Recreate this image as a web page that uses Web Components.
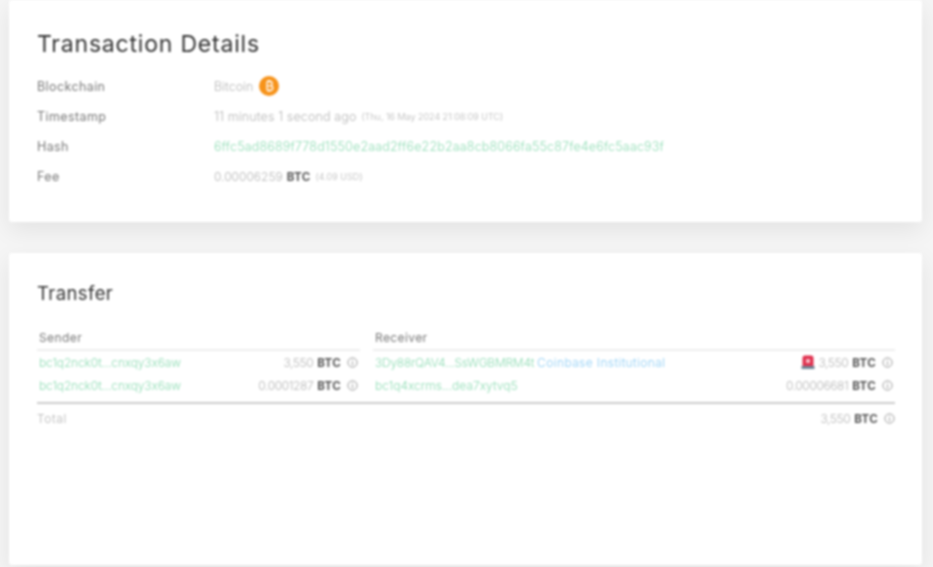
<!DOCTYPE html>
<html>
<head>
<meta charset="utf-8">
<title>Transaction</title>
<style>
html, body { margin: 0; height: 100%; }
body {
	background: #f5f5f5;
	font-family: "Inter", "Liberation Sans", sans-serif;
	overflow: hidden;
}
</style>
</head>
<body>
<tx-page>
	<tx-card title="Transaction Details" size="big">
		<detail-row label="Blockchain"><span>Bitcoin</span> <btc-logo></btc-logo></detail-row>
		<detail-row label="Timestamp"><span style="letter-spacing:.13px">11 minutes 1 second ago</span> <small style="font-size:9px">(Thu, 16 May 2024 21:08:09 UTC)</small></detail-row>
		<detail-row label="Hash"><span style="color:#8fdcb4;letter-spacing:.17px">6ffc5ad8689f778d1550e2aad2ff6e22b2aa8cb8066fa55c87fe4e6fc5aac93f</span></detail-row>
		<detail-row label="Fee"><btc-amount value="0.00006259"></btc-amount> <small style="font-size:9px;letter-spacing:.1px">(4.09 USD)</small></detail-row>
	</tx-card>
	<tx-card title="Transfer" size="small" fill>
		<transfer-table></transfer-table>
	</tx-card>
</tx-page>

<script>
//#region PAGE
const page_template = document.createElement("template");
page_template.innerHTML = /* html */ `
<style>
:host {
	display: flex;
	flex-direction: column;
	gap: 31px;
	box-sizing: border-box;
	height: 567px;
	padding: 0 11px 2px 9px;
	filter: blur(0.8px);
}
</style>
<slot></slot>
`;
window.customElements.define(
	"tx-page",
	class extends HTMLElement {
		constructor() {
			super();
			this.attachShadow({mode: "open"}).appendChild(
				page_template.content.cloneNode(true)
			);
		}
	}
);
//#endregion PAGE

//#region CARD
const card_template = document.createElement("template");
card_template.innerHTML = /* html */ `
<style>
:host {
	display: block;
	box-sizing: border-box;
	background: #fff;
	border-radius: 3px;
	box-shadow: 0 8px 24px rgba(0, 0, 0, 0.08);
	padding: 0 27px 0 28px;
}
:host([size="big"]) { height: 222px; }
:host([fill]) { flex: 1; }
h2 {
	margin: 0;
	font-weight: 400;
	color: #333;
}
:host([size="big"]) h2 {
	font-size: 23px;
	letter-spacing: 0.8px;
	line-height: 28px;
	padding: 30px 0 13px;
}
:host([size="small"]) h2 {
	font-size: 18.5px;
	letter-spacing: 0.4px;
	line-height: 24px;
	padding: 28px 0 21px;
}
</style>
<h2></h2>
<slot></slot>
`;
window.customElements.define(
	"tx-card",
	class extends HTMLElement {
		constructor() {
			super();
			this.attachShadow({mode: "open"}).appendChild(
				card_template.content.cloneNode(true)
			);
		}

		connectedCallback() {
			this.shadowRoot.querySelector("h2").textContent = this.getAttribute("title");
			this.removeAttribute("title");
		}
	}
);
//#endregion CARD

//#region DETAIL ROW
const row_template = document.createElement("template");
row_template.innerHTML = /* html */ `
<style>
:host {
	display: grid;
	grid-template-columns: 177px 1fr;
	align-items: center;
	height: 30px;
	font-size: 12.5px;
}
.label { color: #777; letter-spacing: 0.4px; }
.value {
	display: flex;
	align-items: center;
	gap: 5px;
	color: #b5b5b5;
	font-weight: 300;
	white-space: nowrap;
}
</style>
<div class="label"></div>
<div class="value"><slot></slot></div>
`;
window.customElements.define(
	"detail-row",
	class extends HTMLElement {
		constructor() {
			super();
			this.attachShadow({mode: "open"}).appendChild(
				row_template.content.cloneNode(true)
			);
		}

		connectedCallback() {
			this.shadowRoot.querySelector(".label").textContent = this.getAttribute("label");
		}
	}
);
//#endregion DETAIL ROW

//#region LOGO
const logo_template = document.createElement("template");
logo_template.innerHTML = /* html */ `
<style>
:host { display: inline-flex; margin-left: 1px; }
</style>
<svg width="20" height="20" viewBox="0 0 20 20">
	<circle cx="10" cy="10" r="10" fill="#f7931a"/>
	<path d="M8 5.500h3a2 2 0 0 1 0 4.300H8m0 0h3.600a2.100 2.100 0 0 1 0 4.400H8M8 5.500v8.700M9.300 4v1.500M11 4v1.500M9.300 14.200v1.600M11 14.200v1.600" fill="none" stroke="#fff" stroke-width="1.300"/>
</svg>
`;
window.customElements.define(
	"btc-logo",
	class extends HTMLElement {
		constructor() {
			super();
			this.attachShadow({mode: "open"}).appendChild(
				logo_template.content.cloneNode(true)
			);
		}
	}
);
//#endregion LOGO

//#region AMOUNT
const amount_template = document.createElement("template");
amount_template.innerHTML = /* html */ `
<style>
:host {
	display: inline-flex;
	align-items: baseline;
	gap: 4px;
	color: #b5b5b5;
	font-size: 12px;
	font-weight: 300;
	white-space: nowrap;
}
:host([tight]) .num { letter-spacing: -0.4px; }
b { color: #555; font-weight: 700; font-size: 11.5px; letter-spacing: 0.3px; }
</style>
<span class="num"></span> <b>BTC</b>
<slot></slot>
`;
window.customElements.define(
	"btc-amount",
	class extends HTMLElement {
		constructor() {
			super();
			this.attachShadow({mode: "open"}).appendChild(
				amount_template.content.cloneNode(true)
			);
		}

		connectedCallback() {
			this.shadowRoot.querySelector(".num").textContent = this.getAttribute("value");
		}
	}
);
//#endregion AMOUNT

//#region TABLE
const info = `<svg width="11" height="11" viewBox="0 0 11 11" style="margin-left:3px"><circle cx="5.500" cy="5.500" r="4.600" fill="none" stroke="#999" stroke-width="1"/><path d="M5.500 5v3M5.500 3v1" stroke="#999" stroke-width="1"/></svg>`;
const table_template = document.createElement("template");
table_template.innerHTML = /* html */ `
<style>
:host {
	display: block;
	font-size: 12px;
	font-weight: 300;
	color: #b5b5b5;
}
.cols {
	display: grid;
	grid-template-columns: 323px 1fr;
	column-gap: 13px;
	padding-bottom: 5px;
	border-bottom: 2px solid #ccc;
}
.head {
	font-weight: 400;
	color: #777;
	letter-spacing: 0.4px;
	padding: 0 2px;
	height: 23px;
	line-height: 24px;
	border-bottom: 2px solid #eee;
}
.row {
	display: flex;
	justify-content: space-between;
	align-items: center;
	height: 23px;
	padding: 0 2px;
	white-space: nowrap;
}
a { color: #8fdcb4; text-decoration: none; letter-spacing: -0.15px; }
.recv { letter-spacing: -0.24px; }
.tag { color: #8ccdf5; margin-left: 3px; letter-spacing: 0.4px; }
.wide { letter-spacing: 0; }
.right { display: flex; align-items: center; gap: 3px; }
.total {
	display: flex;
	justify-content: space-between;
	align-items: center;
	height: 28px;
	letter-spacing: 0.6px;
}
.total .right { letter-spacing: 0; }
</style>
<div class="cols">
	<div>
		<div class="head">Sender</div>
		<div class="row"><a>bc1q2nck0t...cnxqy3x6aw</a><span class="right"><btc-amount tight value="3,550"></btc-amount>${info}</span></div>
		<div class="row"><a>bc1q2nck0t...cnxqy3x6aw</a><span class="right"><btc-amount tight value="0.0001287"></btc-amount>${info}</span></div>
	</div>
	<div>
		<div class="head">Receiver</div>
		<div class="row"><span><a class="recv">3Dy88rQAV4...SsWGBMRM4t</a><span class="tag">Coinbase Institutional</span></span><span class="right"><svg width="14" height="15" viewBox="0 0 14 15"><path d="M1.500 11V3a2.500 2.500 0 0 1 2.500-2.500h6A2.500 2.500 0 0 1 12.500 3v8z" fill="#e0304e"/><rect x="0.500" y="11" width="13" height="3" fill="#6f8596"/><rect x="5" y="4" width="4" height="4" fill="#f7b6c2"/></svg><btc-amount tight value="3,550"></btc-amount>${info}</span></div>
		<div class="row"><a class="wide">bc1q4xcrms...dea7xytvq5</a><span class="right"><btc-amount tight value="0.00006681"></btc-amount>${info}</span></div>
	</div>
</div>
<div class="total"><span>Total</span><span class="right"><btc-amount tight value="3,550"></btc-amount>${info}</span></div>
`;
window.customElements.define(
	"transfer-table",
	class extends HTMLElement {
		constructor() {
			super();
			this.attachShadow({mode: "open"}).appendChild(
				table_template.content.cloneNode(true)
			);
		}
	}
);
//#endregion TABLE
</script>
</body>
</html>
